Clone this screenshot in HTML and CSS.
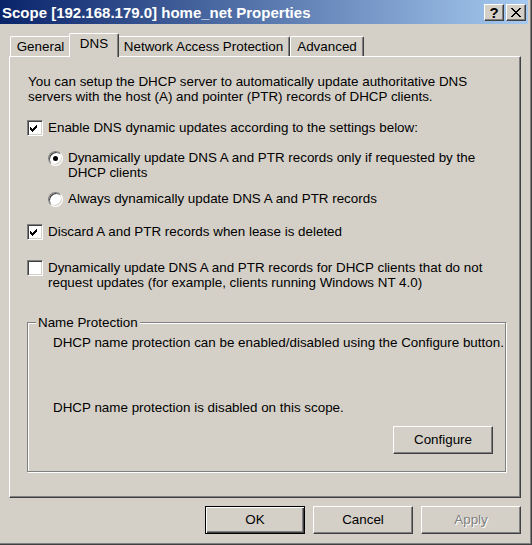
FILE: index.html
```html
<!DOCTYPE html>
<html lang="en">
<head>
<meta charset="utf-8">
<title>Scope [192.168.179.0] home_net Properties</title>
<link rel="stylesheet" href="styles.css">
</head>
<body>
<div class="window">
  <div class="titlebar">
    <span class="title">Scope [192.168.179.0] home_net Properties</span>
    <div class="caption-btns">
      <span class="cap-btn cap-help">?</span>
      <span class="cap-btn cap-close">
        <svg width="10" height="9" viewBox="0 0 10 9" shape-rendering="crispEdges"><path d="M0 0h2v1h-2zM8 0h2v1h-2zM1 1h2v1h-2zM7 1h2v1h-2zM2 2h2v1h-2zM6 2h2v1h-2zM3 3h4v1h-4zM4 4h2v1h-2zM3 5h4v1h-4zM2 6h2v1h-2zM6 6h2v1h-2zM1 7h2v1h-2zM7 7h2v1h-2zM0 8h2v1h-2zM8 8h2v1h-2z" fill="#000"/></svg>
      </span>
    </div>
  </div>
  <div class="client">
    <div class="tabs">
      <div class="tab tab-general">General</div>
      <div class="tab tab-dns selected">DNS</div>
      <div class="tab tab-nap">Network Access Protection</div>
      <div class="tab tab-adv">Advanced</div>
    </div>
    <div class="panel">
      <p class="intro">You can setup the DHCP server to automatically update authoritative DNS<br>servers with the host (A) and pointer (PTR) records of DHCP clients.</p>

      <div class="opt opt-enable">
        <span class="check"><svg width="7" height="7" viewBox="0 0 7 7" shape-rendering="crispEdges"><path d="M6 0h1v1h-1zM5 1h2v1h-2zM0 2h1v1h-1zM4 2h3v1h-3zM0 3h2v1h-2zM3 3h3v1h-3zM0 4h5v1h-5zM1 5h3v1h-3zM2 6h1v1h-1z" fill="#000"/></svg></span>
        <span class="label">Enable DNS dynamic updates according to the settings below:</span>
      </div>

      <div class="opt radio-row radio-first">
        <span class="radio on"></span>
        <span class="label">Dynamically update DNS A and PTR records only if requested by the<br>DHCP clients</span>
      </div>

      <div class="opt radio-row radio-second">
        <span class="radio"></span>
        <span class="label">Always dynamically update DNS A and PTR records</span>
      </div>

      <div class="opt opt-discard">
        <span class="check"><svg width="7" height="7" viewBox="0 0 7 7" shape-rendering="crispEdges"><path d="M6 0h1v1h-1zM5 1h2v1h-2zM0 2h1v1h-1zM4 2h3v1h-3zM0 3h2v1h-2zM3 3h3v1h-3zM0 4h5v1h-5zM1 5h3v1h-3zM2 6h1v1h-1z" fill="#000"/></svg></span>
        <span class="label">Discard A and PTR records when lease is deleted</span>
      </div>

      <div class="opt opt-always">
        <span class="check"></span>
        <span class="label">Dynamically update DNS A and PTR records for DHCP clients that do not<br>request updates (for example, clients running Windows NT 4.0)</span>
      </div>

      <div class="group">
        <span class="group-label">Name Protection</span>
        <div class="g-text">DHCP name protection can be enabled/disabled using the Configure button.</div>
        <div class="g-text g-status">DHCP name protection is disabled on this scope.</div>
        <div class="g-actions"><button class="btn" type="button">Configure</button></div>
      </div>
    </div>
    <div class="footer">
      <button class="btn default" type="button">OK</button>
      <button class="btn" type="button">Cancel</button>
      <button class="btn" type="button" disabled>Apply</button>
    </div>
  </div>
</div>
</body>
</html>
```

FILE: styles.css
```css
* { box-sizing: border-box; }

html, body {
  margin: 0;
  padding: 0;
  background: #d4d0c8;
}

body {
  font-family: "Liberation Sans", Arial, sans-serif;
  font-size: 13.4px;
  line-height: 15px;
  color: #000;
}

.window {
  width: 532px;
  height: 545px;
  padding: 0 4px 4px 0;
  display: flex;
  flex-direction: column;
  background: #d4d0c8;
  box-shadow: inset -1px -1px #404040, inset -2px -2px #808080;
}

/* Title bar */
.titlebar {
  height: 24px;
  flex: none;
  display: flex;
  align-items: flex-start;
  justify-content: space-between;
  background: linear-gradient(to right, #0a246a, #a6caf0);
}

.title {
  color: #fff;
  font-weight: bold;
  font-size: 15px;
  line-height: 22px;
  padding: 2px 0 0 2px;
  white-space: nowrap;
}

.caption-btns {
  display: flex;
  gap: 2px;
  margin: 4px 2px 0 0;
}

.cap-btn {
  width: 20px;
  height: 17px;
  display: flex;
  align-items: center;
  justify-content: center;
  background: #d4d0c8;
  border: 1px solid;
  border-color: #fff #404040 #404040 #fff;
  box-shadow: inset -1px -1px #808080;
}

.cap-help {
  font-weight: bold;
  font-size: 15px;
  line-height: 15px;
  padding-bottom: 1px;
}

/* Client area */
.client {
  flex: 1;
  display: flex;
  flex-direction: column;
  padding: 9px 7px 7px 9px;
}

.tabs {
  display: flex;
  align-items: flex-end;
  padding-left: 1px;
  flex: none;
}

.tab {
  height: 20px;
  background: #d4d0c8;
  border: 1px solid;
  border-bottom: 0;
  border-color: #fff #404040 #404040 #fff;
  border-radius: 2px 2px 0 0;
  box-shadow: inset -1px 0 #808080;
  text-align: center;
  padding-top: 2px;
  white-space: nowrap;
}

.tab-general { width: 61px; }
.tab-dns { width: 46px; }
.tab-nap { width: 173px; }
.tab-adv { width: 74px; }

.tab.selected {
  height: 24px;
  width: 50px;
  margin: 0 -2px -1px;
  position: relative;
  z-index: 1;
}

.panel {
  flex: 1;
  background: #d4d0c8;
  border: 1px solid;
  border-color: #fff #404040 #404040 #fff;
  box-shadow: inset -1px -1px #808080;
  padding: 17px 2px 0 17px;
  display: flex;
  flex-direction: column;
  white-space: nowrap;
}

.intro {
  margin: 0 0 0 1px;
}

.opt {
  display: flex;
  align-items: flex-start;
  gap: 5px;
}

.opt-enable { margin-top: 16px; }
.radio-row { padding-left: 21px; }
.radio-first { margin-top: 14px; }
.radio-second { margin-top: 11px; }
.opt-discard { margin-top: 17px; }
.opt-always { margin-top: 20px; }

.check {
  flex: none;
  width: 16px;
  height: 16px;
  background: #fff;
  border: 1px solid;
  border-color: #808080 #fff #fff #808080;
  box-shadow: inset 1px 1px #404040, inset -1px -1px #d4d0c8;
  padding: 4px 0 0 2px;
  display: flex;
  align-items: flex-start;
}

.radio {
  flex: none;
  width: 15px;
  height: 15px;
  margin-top: 1px;
  border-radius: 50%;
  background: #fff;
  border: 1px solid;
  border-color: #808080 #fff #fff #808080;
  box-shadow: inset 1px 1px #404040, inset -1px -1px #d4d0c8;
  display: flex;
  align-items: center;
  justify-content: center;
}

.radio.on::after {
  content: "";
  width: 5px;
  height: 5px;
  border-radius: 50%;
  background: #000;
}

/* Group box */
.group {
  position: relative;
  width: 479px;
  height: 150px;
  margin-top: 32px;
  border: 1px solid #808080;
  box-shadow: inset 1px 1px #fff, 1px 1px #fff;
  padding: 12px 12px 17px 25px;
  display: flex;
  flex-direction: column;
}

.group-label {
  position: absolute;
  top: -8px;
  left: 8px;
  padding: 0 2px;
  background: #d4d0c8;
}

.g-status { margin-top: 50px; }

.g-actions {
  margin-top: 11px;
  display: flex;
  justify-content: flex-end;
}

/* Buttons */
.btn {
  width: 100px;
  height: 28px;
  margin: 0;
  padding: 0 0 2px;
  font-family: inherit;
  font-size: 13.4px;
  line-height: 15px;
  color: #000;
  background: #d4d0c8;
  border: 1px solid;
  border-color: #fff #404040 #404040 #fff;
  border-radius: 0;
  box-shadow: inset -1px -1px #808080;
}

.btn.default {
  border-color: #000;
  box-shadow: inset 1px 1px #fff, inset -1px -1px #404040, inset -2px -2px #808080;
}

.btn:disabled {
  color: #808080;
  text-shadow: 1px 1px #fff;
}

.footer {
  flex: none;
  display: flex;
  justify-content: flex-end;
  gap: 8px;
  margin-top: 8px;
}
```
